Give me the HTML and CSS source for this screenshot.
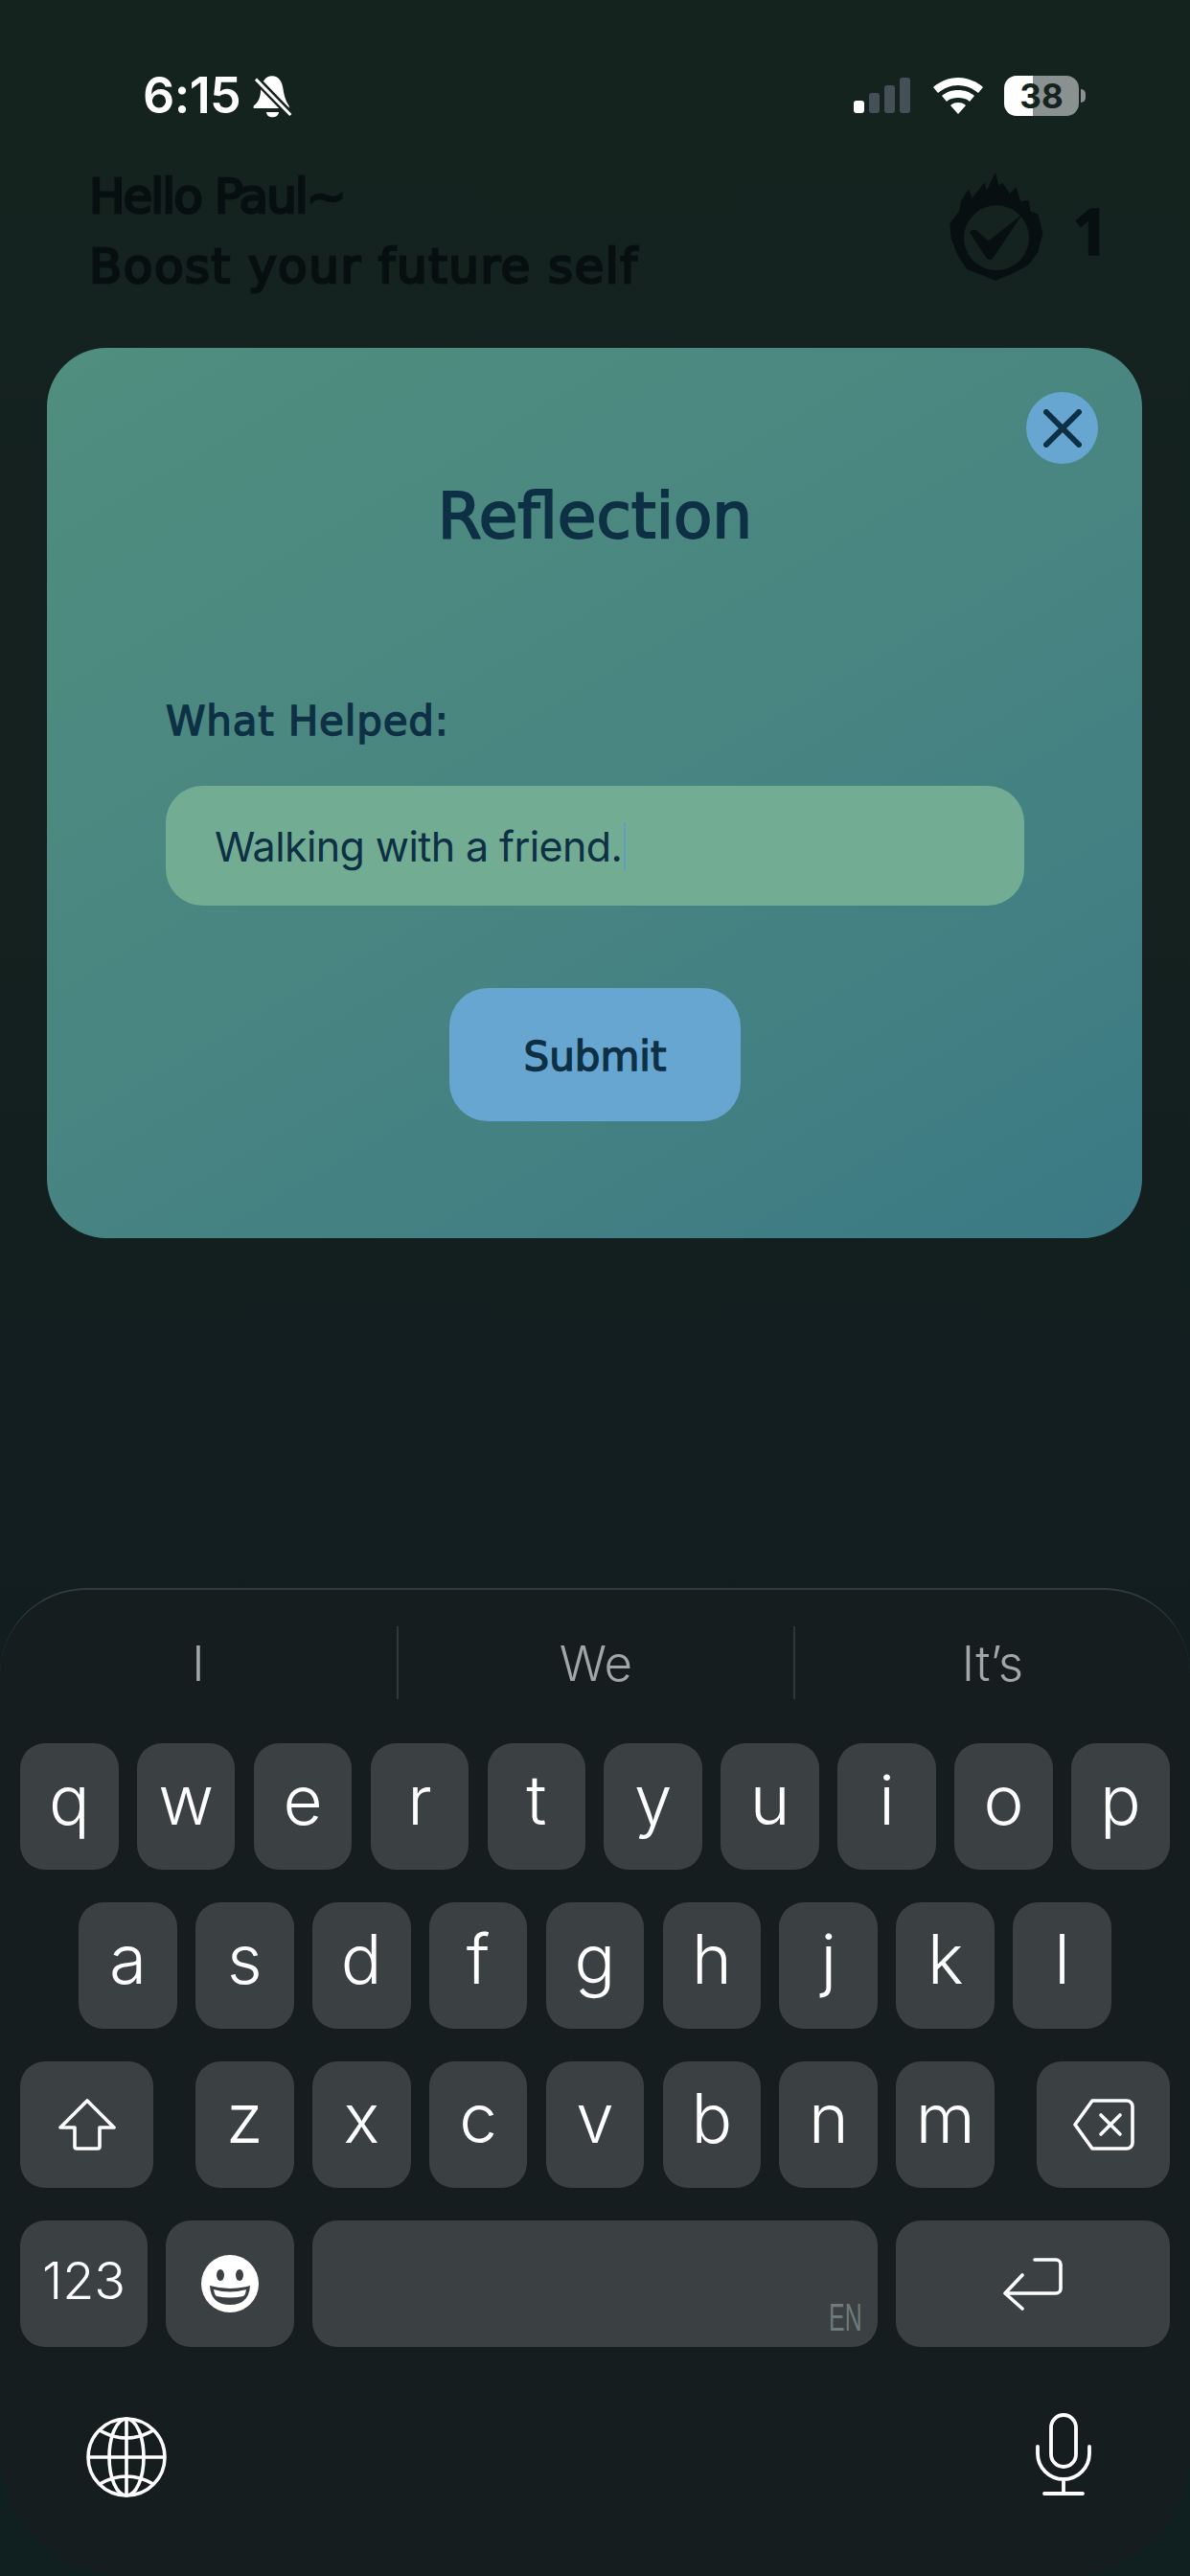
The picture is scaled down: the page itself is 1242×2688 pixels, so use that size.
FILE: index.html
```
<!DOCTYPE html>
<html lang="en">
<head>
<meta charset="utf-8">
<title>Reflection</title>
<link rel="stylesheet" href="styles.css">
</head>
<body>
<div class="screen">
  <div class="status">
    <div class="status-left">
      <span class="time">6:15</span>
      <svg class="bell" viewBox="405 50 130 140"><path fill="#fff" d="M468 56C490 56 500 75 503 95C507 125 515 140 522 150V158H410V150C425 140 432 125 433 95C436 75 448 56 468 56ZM450 170H490C488 182 478 186 470 186C460 186 452 182 450 170Z"/><path stroke="#15231f" stroke-width="24" d="M405 53 535 187"/><path stroke="#fff" stroke-width="9" d="M417 66 527 179"/></svg>
    </div>
    <div class="status-right">
      <svg class="signal" viewBox="0 0 59 37"><rect x="0" y="24" width="11" height="13" rx="3" fill="#fff"/><rect x="16" y="16" width="11" height="21" rx="3" fill="#445055"/><rect x="32" y="8" width="11" height="29" rx="3" fill="#445055"/><rect x="48" y="0" width="11" height="37" rx="3" fill="#445055"/></svg>
      <svg class="wifi" viewBox="0 0 52 38"><path fill="#fff" d="M26 0c10 0 19 4 26 10l-5 6C41 11 34 8 26 8S11 11 5 16l-5-6C7 4 16 0 26 0zm0 13c7 0 12 2 17 6l-5 6c-3-3-7-4-12-4s-9 1-12 4l-5-6c5-4 10-6 17-6zm0 13c4 0 6 1 8 3l-8 9-8-9c2-2 4-3 8-3z"/></svg>
      <div class="battery"><span class="battery-text">38</span></div>
      <div class="battery-nub"></div>
    </div>
  </div>

  <div class="header">
    <div class="greeting">
      <p class="greeting-line greeting-short">Hello Paul~</p>
      <p class="greeting-line">Boost your future self</p>
    </div>
    <div class="streak">
      <svg class="flame" viewBox="95 358 296 343"><path fill="#070f10" fill-rule="evenodd" d="M240 700 190 680 150 665 120 620 100 570 95 520 125 480 130 450 155 410 165 440 205 390 212 415 240 358 250 400 262 390 285 425 305 405 320 450 345 445 350 480 375 490 390 550 375 610 345 650 300 675ZM243 462a103 103 0 1 0 .1 0Z"/><path fill="#070f10" d="M158 548Q165 535 180 542L218 575 325 490 230 632Q220 638 212 630Z"/></svg>
      <span class="streak-count">1</span>
    </div>
  </div>

  <div class="modal">
    <button class="close" type="button"><svg class="close-icon" viewBox="0 0 40 40"><path d="M3 3 37 37M37 3 3 37" fill="none" stroke="#0e3045" stroke-width="6" stroke-linecap="round"/></svg></button>
    <h1 class="modal-title">Reflection</h1>
    <label class="field-label">What Helped:</label>
    <div class="input"><span class="input-text">Walking with a friend.</span><span class="caret"></span></div>
    <button class="submit" type="button">Submit</button>
  </div>

  <div class="keyboard">
    <div class="suggestions">
      <span class="suggestion">I</span>
      <span class="suggestion">We</span>
      <span class="suggestion">It’s</span>
    </div>
    <div class="row">
      <span class="key">q</span><span class="key">w</span><span class="key">e</span><span class="key">r</span><span class="key">t</span><span class="key">y</span><span class="key">u</span><span class="key">i</span><span class="key">o</span><span class="key">p</span>
    </div>
    <div class="row row-center">
      <span class="key">a</span><span class="key">s</span><span class="key">d</span><span class="key">f</span><span class="key">g</span><span class="key">h</span><span class="key">j</span><span class="key">k</span><span class="key">l</span>
    </div>
    <div class="row row-split">
      <span class="key key-mod"><svg class="icon-shift" viewBox="0 0 62 54"><path d="M31 2 59 30H44V50a2 2 0 0 1-2 2H20a2 2 0 0 1-2-2V30H3Z" fill="none" stroke="#fff" stroke-width="3.6" stroke-linejoin="round"/></svg></span>
      <div class="row-inner">
        <span class="key">z</span><span class="key">x</span><span class="key">c</span><span class="key">v</span><span class="key">b</span><span class="key">n</span><span class="key">m</span>
      </div>
      <span class="key key-mod"><svg class="icon-delete" viewBox="0 0 64 54"><path d="M20 2H56a6 6 0 0 1 6 6V46a6 6 0 0 1-6 6H20L2 27Z" fill="none" stroke="#fff" stroke-width="3.6" stroke-linejoin="round"/><path d="M29 17 49 37M49 17 29 37" fill="none" stroke="#fff" stroke-width="3.6" stroke-linecap="round"/></svg></span>
    </div>
    <div class="row row-bottom">
      <span class="key key-num">123</span>
      <span class="key key-emoji"><svg class="icon-emoji" viewBox="0 0 60 60"><circle cx="30" cy="30" r="30" fill="#fff"/><ellipse cx="20" cy="21" rx="4" ry="6" fill="#3b4043"/><ellipse cx="40" cy="21" rx="4" ry="6" fill="#3b4043"/><path d="M9 32Q30 38 51 32Q50 52 30 52Q10 52 9 32Z" fill="#3b4043"/><path d="M13 36Q30 41 47 36Q46 42 44 43Q30 46 16 43Q14 42 13 36Z" fill="#fff"/></svg></span>
      <span class="key key-space"><span class="lang">EN</span></span>
      <span class="key key-return"><svg class="icon-return" viewBox="0 0 62 55"><path d="M33 2H55a5 5 0 0 1 5 5V32a5 5 0 0 1-5 5H2M20 18 2 37 20 53" fill="none" stroke="#fff" stroke-width="3.6" stroke-linecap="round" stroke-linejoin="round"/></svg></span>
    </div>
    <div class="kb-tools">
      <svg class="icon-globe" viewBox="0 0 84 84"><g fill="none" stroke="#fff" stroke-width="3.6"><circle cx="42" cy="42" r="40"/><ellipse cx="42" cy="42" rx="18" ry="40"/><path d="M42 2V82M2 42H82M14 14Q42 30 70 14M14 70Q42 54 70 70"/></g></svg>
      <svg class="icon-mic" viewBox="0 0 58 88"><g fill="none" stroke="#fff" stroke-width="3.8"><rect x="16" y="2" width="26" height="54" rx="13"/><path d="M2 35V42a27 27 0 0 0 54 0V35M29 70V84M9 84H49" stroke-linecap="round"/></g></svg>
    </div>
  </div>
</div>
</body>
</html>
```

FILE: styles.css
```
* { box-sizing: border-box; }
html, body { margin: 0; padding: 0; }
body { width: 1242px; height: 2688px; overflow: hidden; font-family: "Inter", "Liberation Sans", sans-serif; }

.screen {
  width: 1242px;
  height: 2688px;
  display: flex;
  flex-direction: column;
  background: linear-gradient(180deg, #15231f 0%, #14211f 35%, #111d1f 62%, #101f20 100%);
  overflow: hidden;
}

/* status bar */
.status { height: 80px; margin-top: 79px; padding: 0 109px 0 149px; display: flex; justify-content: space-between; align-items: flex-start; flex: none; }
.status-left { display: flex; align-items: flex-start; gap: 12px; }
.time { font-family: "Inter", sans-serif; font-weight: 600; font-size: 52px; line-height: 42px; color: #fff; letter-spacing: -0.6px; }
.bell { width: 43px; height: 47px; margin-top: -2px; }
.status-right { display: flex; align-items: flex-start; }
.signal { width: 59px; height: 37px; margin-top: 2px; }
.wifi { width: 52px; height: 38px; margin: 2px 0 0 24px; }
.battery { width: 78px; height: 42px; margin-left: 22px; border-radius: 13px; background: linear-gradient(90deg, #fff 0 30px, #8b9090 30px 100%); display: flex; align-items: center; justify-content: center; }
.battery-text { font-family: "Inter", sans-serif; font-weight: 700; font-size: 35px; line-height: 42px; color: #15231f; }
.battery-nub { width: 5px; height: 14px; margin: 14px 0 0 2px; border-radius: 0 5px 5px 0; background: #8b9090; }

/* header */
.header { height: 204px; padding: 16px 85px 0 93px; display: flex; justify-content: space-between; flex: none; }
.greeting { display: flex; flex-direction: column; gap: 13px; }
.greeting-line { margin: 0; font-family: "DejaVu Sans", sans-serif; font-size: 50px; line-height: 60px; letter-spacing: 1.5px; color: #070f10; -webkit-text-stroke: 2.6px #070f10; }
.greeting-short { letter-spacing: -2px; }
.streak { display: flex; align-items: flex-start; gap: 30px; margin-top: 5px; }
.flame { width: 98px; height: 113px; }
.streak-count { font-family: "Open Sans", sans-serif; font-weight: 700; font-size: 66px; line-height: 60px; margin-top: 30px; color: #070f10; -webkit-text-stroke: 1.5px #070f10; }

/* modal */
.modal { position: relative; flex: none; width: 1143px; height: 929px; margin-left: 49px; border-radius: 62px; background: linear-gradient(150deg, #508e7f 0%, #498581 50%, #3b7a85 100%); padding: 136px 123px 0 124px; display: flex; flex-direction: column; }
.close { position: absolute; top: 46px; right: 46px; width: 75px; height: 75px; border: 0; border-radius: 50%; background: #67a6d0; padding: 0; display: flex; align-items: center; justify-content: center; }
.close-icon { width: 40px; height: 40px; }
.modal-title { margin: 0; text-align: center; font-family: "DejaVu Sans", sans-serif; font-weight: 400; font-size: 66px; line-height: 80px; color: #0e3045; -webkit-text-stroke: 2px #0e3045; }
.field-label { display: block; margin-top: 146px; font-family: "DejaVu Sans", sans-serif; font-size: 42px; line-height: 56px; letter-spacing: .8px; color: #0e3045; -webkit-text-stroke: 1.4px #0e3045; }
.input { margin-top: 39px; width: 896px; height: 125px; border-radius: 38px; background: #72ad93; padding: 0 0 0 51px; display: flex; align-items: center; }
.input-text { font-family: "Inter", sans-serif; font-size: 43px; color: #0e3045; letter-spacing: -0.6px; }
.caret { width: 2px; height: 50px; margin-left: 2px; background: #5f9fc4; }
.submit { align-self: center; margin-top: 86px; width: 304px; height: 139px; border: 0; border-radius: 40px; background: #66a6d0; font-family: "DejaVu Sans", sans-serif; font-size: 42px; color: #0e3045; -webkit-text-stroke: 1.4px #0e3045; padding: 3px 0 0; }

/* keyboard */
.keyboard { margin-top: auto; height: 1031px; flex: none; border-top: 2px solid #2e3c3e; border-radius: 90px 90px 130px 130px; background: #161d1f; padding: 0 21px; display: flex; flex-direction: column; }
.suggestions { height: 160px; display: grid; grid-template-columns: repeat(3, 1fr); padding-top: 38px; margin: 0 -21px; }
.suggestion { height: 76px; display: flex; align-items: center; justify-content: center; font-family: "Inter", sans-serif; font-weight: 300; font-size: 51px; color: #a1a6a7; border-left: 2px solid #2f393c; }
.suggestion:first-child { border-left: 0; }
.row { display: flex; gap: 19.3px; margin-bottom: 34px; height: 132px; flex: none; }
.row-center { justify-content: center; }
.row-split { justify-content: space-between; }
.row-inner { display: flex; gap: 19.3px; }
.row-bottom { gap: 19px; margin-bottom: 0; }
.key { width: 102.6px; height: 132px; flex: none; border-radius: 26px; background: #3b4043; color: #fff; font-family: "Inter", sans-serif; font-weight: 300; font-size: 71px; line-height: 1; display: flex; align-items: center; justify-content: center; padding-bottom: 14px; }
.key-mod { width: 139px; padding-bottom: 0; }
.key-num { width: 133px; font-size: 54px; padding-bottom: 6px; }
.key-emoji { width: 134px; padding-bottom: 0; }
.key-space { width: 590px; position: relative; padding-bottom: 0; }
.key-return { width: 286px; padding-bottom: 0; }
.lang { position: absolute; right: 16px; bottom: 16px; font-family: "Liberation Sans", sans-serif; font-size: 40px; line-height: 30px; color: #6f7a7a; transform: scaleX(.62); transform-origin: right center; }
.icon-shift { width: 62px; height: 54px; }
.icon-delete { width: 64px; height: 54px; }
.icon-emoji { width: 60px; height: 60px; }
.icon-return { width: 62px; height: 55px; }
.kb-tools { display: flex; justify-content: space-between; align-items: flex-end; padding: 70px 82px 0 69px; height: 157px; flex: none; }
.icon-globe { width: 84px; height: 84px; }
.icon-mic { width: 58px; height: 88px; }
```
